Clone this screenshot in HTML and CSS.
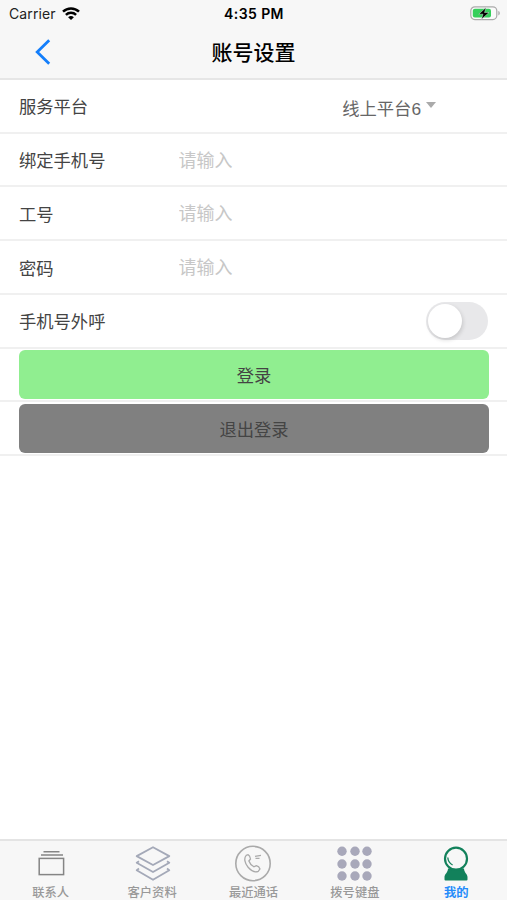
FILE: index.html
```html
<!DOCTYPE html>
<html lang="zh-CN">
<head>
<meta charset="utf-8">
<title>账号设置</title>
<link rel="stylesheet" href="styles.css">
</head>
<body>
<div class="app">
  <header class="header">
    <div class="status">
      <div class="carrier">
        <span>Carrier</span>
        <svg class="wifi" width="18" height="14" viewBox="0 0 18 14" fill="none" stroke="#000" stroke-width="2.5"><path d="M1 4.700a11.500 11.500 0 0 1 16 0"/><path d="M3.900 7.900a7.400 7.400 0 0 1 10.200 0"/><path d="M9 13L6.100 10.200a4.300 4.300 0 0 1 5.800 0z" fill="#000" stroke="none"/></svg>
      </div>
      <span class="time">4:35 PM</span>
      <svg class="battery" width="31" height="15" viewBox="0 0 31 15"><rect x=".8" y=".8" width="26" height="12.8" rx="4" fill="#fafafa" stroke="#aaa" stroke-width="1.2"/><rect x="2.8" y="2.8" width="18.2" height="8.8" rx="2" fill="#35cf5b"/><path d="M28.3 5v4.4c2-.6 2-3.8 0-4.4z" fill="#aaa"/><path d="M16 1.500L8.800 8.200h4.200l-1.500 5L19 6.500h-4.500z" fill="#000" stroke="#f7f7f7" stroke-width=".4"/></svg>
    </div>
    <div class="nav">
      <svg class="back" width="16" height="26" viewBox="0 0 16 26" fill="none" stroke="#137efb" stroke-width="2.8"><path d="M14.2 1.2L2.2 13l12 11.8"/></svg>
      <h1 class="title">账号设置</h1>
    </div>
  </header>
  <main class="form">
    <div class="row"><span class="label">服务平台</span><div class="select">线上平台6<i class="arrow"></i></div></div>
    <label class="row"><span class="label">绑定手机号</span><input class="input" type="text" placeholder="请输入"></label>
    <label class="row"><span class="label">工号</span><input class="input" type="text" placeholder="请输入"></label>
    <label class="row"><span class="label">密码</span><input class="input" type="password" placeholder="请输入"></label>
    <div class="row"><span class="label">手机号外呼</span><div class="switch"><div class="knob"></div></div></div>
    <div class="row"><button class="button login">登录</button></div>
    <div class="row"><button class="button logout">退出登录</button></div>
  </main>
  <nav class="tabs">
    <a class="tab"><svg width="40" height="43" viewBox="0 0 40 43" fill="none" stroke="#858585" stroke-width="1.5"><path d="M12.500 10.700h16M10 14h22"/><rect x="8.200" y="17.400" width="24.400" height="16.200"/></svg><span>联系人</span></a>
    <a class="tab"><svg width="40" height="43" viewBox="-1 0 40 43" fill="none" stroke="#a4a9b8" stroke-width="1.800" stroke-linejoin="round"><path d="M20 6.200l16.300 8.900L20 24 3.700 15.100z"/><path d="M6 20.200l-2.300 1.600L20 31l16.300-9.200-2.300-1.600M6 27.600l-2.300 1.600L20 38.800l16.300-9.600-2.300-1.600"/></svg><span>客户资料</span></a>
    <a class="tab"><svg width="40" height="43" viewBox="0 0 40 43" fill="none" stroke="#aaa" stroke-width="1.300"><circle cx="20" cy="22.500" r="17.200" stroke-width="1.600"/><path d="M13.200 14.400l1.800-.8c1.300.6 2.200 2.600 2.500 4.400l-1.600 2c.8 2.400 2.600 4.500 5 5.800l2.400-1.100c1.700.4 3.200 1.800 3.700 3.300l-1.700 2.300c-2.800 1.100-7-.3-10.200-4-3.300-3.800-4.500-9.100-1.900-11.900z"/><path d="M22 15.300l6-1M22.500 17.300h4"/></svg><span>最近通话</span></a>
    <a class="tab"><svg width="40" height="43" viewBox="1 0 40 43" fill="#a8a8ba"><circle cx="8" cy="10.2" r="4.7"/><circle cx="21" cy="10.2" r="4.7"/><circle cx="33" cy="10.2" r="4.7"/><circle cx="8" cy="23" r="4.7"/><circle cx="21" cy="23" r="4.7"/><circle cx="33" cy="23" r="4.7"/><circle cx="8" cy="35" r="4.7"/><circle cx="21" cy="35" r="4.7"/><circle cx="33" cy="35" r="4.7"/></svg><span>拨号键盘</span></a>
    <a class="tab active"><svg width="40" height="43" viewBox="0 0 40 43" fill="none"><path d="M12 27.500h16c0 4 3.500 5.500 3.500 8.500v2.500q0 1-1 1h-21q-1 0-1-1V36c0-3 3.500-4.500 3.500-8.500z" fill="#12815b"/><circle cx="20" cy="17.700" r="11" fill="#f7f7f7" stroke="#12815b" stroke-width="2.200"/><path d="M11.800 16.500c.2 3.700 2 6 4.800 7.500" stroke="#12815b" stroke-width="1.300"/></svg><span>我的</span></a>
  </nav>
</div>
</body>
</html>
```
FILE: styles.css
```css
* { box-sizing: border-box; }
body {
  margin: 0;
  background: #fff;
  color: #444;
  font-family: "Liberation Sans", "Noto Sans CJK SC", sans-serif;
}
.app { display: flex; flex-direction: column; height: 900px; overflow: hidden; }
.header { height: 80px; background: #f7f7f7; border-bottom: 2px solid #e6e6e6; color: #000; }
.status {
  display: grid;
  grid-template-columns: 1fr auto 1fr;
  align-items: center;
  height: 27px;
  padding: 0 6px 0 9px;
  font-family: Inter, sans-serif;
  font-size: 14px;
}
.carrier { display: flex; align-items: center; gap: 6px; color: #222; letter-spacing: .1px; }
.time { font-weight: 600; letter-spacing: .4px; margin-right: 2px; }
.battery { justify-self: end; }
.nav { display: grid; grid-template-columns: 60px 1fr 60px; align-items: center; height: 50px; }
.back { margin-left: 35px; }
.title { margin: 2px 0 0; text-align: center; font-size: 21px; font-weight: 500; line-height: 30px; }
.form { flex: 1; }
.row {
  display: flex;
  align-items: center;
  height: 53.72px;
  padding: 0 18px 0 19px;
  border-bottom: 2px solid #f0f0f0;
  font-size: 17.3px;
}
.label { width: 159.5px; }
.select { display: flex; align-items: center; margin: 3px 0 0 auto; padding-right: 53px; color: #666; }
.arrow { margin: -5px 0 0 5px; border: 5px solid transparent; border-top: 6px solid #aaa; border-bottom: 0; }
.input {
  flex: 1;
  min-width: 0;
  height: 30px;
  padding: 3px 0 0;
  border: 0;
  outline: 0;
  background: none;
  font: inherit;
  font-size: 18px;
}
.input::placeholder { color: #c7c7c7; }
.switch {
  width: 62px;
  height: 38px;
  margin: 0 1px 0 auto;
  padding: 2px;
  border-radius: 19px;
  background: #e8e8ea;
}
.knob { width: 34px; height: 34px; border-radius: 50%; background: #fff; box-shadow: 1px 2px 4px rgba(0, 0, 0, .15); }
.button {
  flex: 1;
  height: 49px;
  margin-top: .5px;
  padding: 0;
  border: 0;
  border-radius: 6px;
  color: #444;
  font: inherit;
}
.login { background: #90ee90; }
.logout { background: #808080; }
.tabs {
  display: grid;
  grid-template-columns: repeat(5, 1fr);
  height: 61px;
  border-top: 2px solid #e4e4e4;
  background: #f7f7f7;
}
.tab { display: flex; flex-direction: column; align-items: center; color: #999; font-size: 12.3px; font-weight: 500; line-height: 16px; }
.tab svg { flex: none; }
.tab span { padding-top: .5px; }
.active { color: #248bfa; font-weight: 700; }
```
